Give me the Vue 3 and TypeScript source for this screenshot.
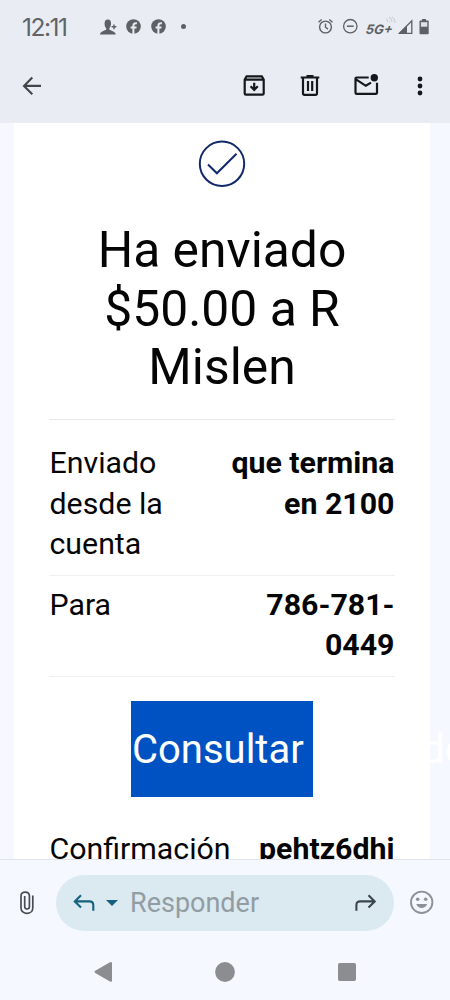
<script setup lang="ts">
interface Detail {
  label: string
  value: string
}

const headingLines: string[] = ['Ha enviado', '$50.00 a R', 'Mislen']
const details: Detail[] = [
  { label: 'Enviado desde la cuenta', value: 'que termina en 2100' },
  { label: 'Para', value: '786-781-0449' },
]
</script>

<template>
  <div class="screen">
    <header class="top">
      <div class="status">
        <span class="clock">12:11</span>
        <div class="notices">
          <svg width="16" height="16" viewBox="0 0 16 16" fill="#5d6064">
            <path d="M7.800.5C10.400.5 11.200 2.400 11 5.200C10.800 7.200 10 8.500 9.400 9.200V10.500C10.500 11.700 15.300 12.200 15.800 15.400H0C.4 12.200 5.200 11.700 6.200 10.500V9.200C5.400 8.500 4.700 7 4.600 5.200C4.400 2.300 5.400.5 7.800.5Z" />
            <path d="M13.300 5.400h1.400v1.700h1.700v1.400h-1.700v1.700h-1.400V8.500h-1.700V7.100h1.700Z" />
          </svg>
          <svg v-for="n in 2" :key="n" width="16" height="16" viewBox="0 0 16 16">
            <circle cx="7.500" cy="7.500" r="7.300" fill="#5d6064" />
            <path d="M7.400 15.300V7C7.400 4.700 8.600 3.900 10.900 4.200M4.600 8.500H10.500" fill="none" stroke="#e9edf3" stroke-width="2" />
          </svg>
          <i class="dot"></i>
        </div>
        <div class="system">
          <svg class="alarm" width="16" height="16" viewBox="0 0 16 16" fill="none" stroke="#5d6064" stroke-width="1.400">
            <circle cx="7.500" cy="8" r="5.900" />
            <path d="M7.500 4.500V8.200l2.500 1.900M.5 3.200 3.700.5M11.300.5 14.500 3.200" />
          </svg>
          <svg class="dnd" width="16" height="16" viewBox="0 0 16 16" fill="none" stroke="#5d6064" stroke-width="1.300">
            <circle cx="7.300" cy="7.200" r="6.700" />
            <path d="M3.900 7.200h6.800" stroke-width="1.500" />
          </svg>
          <span class="network"><span class="network-name">5G+</span>
            <svg class="waves" width="10" height="8" viewBox="0 0 10 8" fill="none" stroke="#cdd0d4" stroke-width="1.200">
              <path d="M.5 2.500 2 6M3 1c2 1 3 3 3 5M6 1c2 1 3 3 3 6M3 6h1" />
            </svg>
          </span>
          <svg class="signal" width="15" height="15" viewBox="0 0 15 15">
            <path d="M.5 13.300 12.800.8V13.300Z" fill="none" stroke="#5d6064" stroke-width="1.300" />
            <path d="M-.5 13.800 8 5.500V13.800Z" fill="#5d6064" />
          </svg>
          <svg class="battery" width="10" height="16" viewBox="0 0 10 16">
            <path d="M2 0h4v1.600h2q.7 0 .7.700v12q0 .9-.9.900H.4q-.9 0-.9-.9V2.300q0-.7.700-.7h1.800Z" fill="#5d6064" />
            <path d="M.9 3.200h6.400v4.500H.9Z" fill="#dfe3e8" />
          </svg>
        </div>
      </div>
      <nav class="toolbar">
        <svg class="back" width="20" height="20" viewBox="0 0 20 20" fill="none" stroke="#424649" stroke-width="2.100">
          <path d="M10.300 1.500 2 9.900 10.300 18.300M2 9.900H19" />
        </svg>
        <svg class="archive" width="22" height="22" viewBox="0 0 22 22" fill="none" stroke="#15181b" stroke-width="2.200">
          <path d="M1.700 4.500V18.400q0 1.300 1.300 1.300H19.400q1.300 0 1.300-1.300V4.500L18.800 1.300H3.600ZM1.700 4.700H20.700M11.200 7.800V14.500M7.600 11.300 11.200 14.900 14.800 11.300" />
        </svg>
        <svg class="trash" width="20" height="22" viewBox="0 0 20 22" fill="none" stroke="#15181b" stroke-width="2.200">
          <path d="M.7 2.500H19.300M6.500 1.200h7M3 2.500V18.300q0 1.500 1.500 1.500h11q1.500 0 1.500-1.500V2.500M8 6V16M12.200 6V16" />
        </svg>
        <svg class="mail" width="25" height="22" viewBox="0 0 25 22" fill="none" stroke="#15181b" stroke-width="2.200">
          <path d="M14.700 2.500H2.700q-1.200 0-1.200 1.200V17.700q0 1.200 1.200 1.200H21.800q1.200 0 1.200-1.200V7.800M2 4.300 11.800 10.800 17 7.600" />
          <circle cx="20.300" cy="2.700" r="3.700" fill="#15181b" stroke="none" />
        </svg>
        <svg class="more" width="6" height="20" viewBox="0 0 6 20" fill="#15181b">
          <circle cx="3" cy="3" r="2.400" />
          <circle cx="3" cy="10" r="2.400" />
          <circle cx="3" cy="17" r="2.400" />
        </svg>
      </nav>
    </header>

    <main class="viewport">
      <article class="card">
        <svg class="check" width="48" height="48" viewBox="0 0 48 48" fill="none" stroke="#12296a" stroke-width="2">
          <circle cx="24" cy="23.800" r="22.200" />
          <path d="M10 24.500 18.900 33.300 38.500 13.800" />
        </svg>
        <h1>
          <span v-for="line in headingLines" :key="line">{{ line }}</span>
        </h1>
        <dl>
          <div v-for="item in details" :key="item.label" class="row">
            <dt>{{ item.label }}</dt>
            <dd>{{ item.value }}</dd>
          </div>
        </dl>
        <a class="action">Consultar <span>el estado</span></a>
        <div class="row last">
          <span>Confirmación</span>
          <b>pehtz6dhi</b>
        </div>
      </article>
    </main>

    <footer class="bottom">
      <div class="reply-bar">
        <svg class="clip" width="16" height="24" viewBox="0 0 16 24" fill="none" stroke="#494d51" stroke-width="1.700">
          <path d="M13.800 4.500V16.700C13.800 24.300 2 24.300 2 16.700V5C2-.3 10.400-.3 10.400 5V15.500C10.400 18.800 5.700 18.800 5.700 15.500V5" />
        </svg>
        <div class="reply">
          <svg class="answer" width="22" height="18" viewBox="0 0 22 18" fill="none" stroke="#14627f" stroke-width="2.100">
            <path d="M8 1.200 1.800 7.400 8 13.600M2 7.400H16.500Q20.300 7.400 20.300 11.200V16.800" />
          </svg>
          <i class="caret"></i>
          <span class="placeholder">Responder</span>
          <svg class="forward" width="22" height="18" viewBox="0 0 22 18" fill="none" stroke="#3c454b" stroke-width="2.100">
            <path d="M13.500 1.200 19.700 7.400 13.500 13.600M19.500 7.400H5.200Q1.400 7.400 1.400 11.200V16.800" />
          </svg>
        </div>
        <svg class="smile" width="24" height="24" viewBox="0 0 24 24" fill="#8e9296">
          <circle cx="11.700" cy="11.300" r="10.700" fill="none" stroke="#8e9296" stroke-width="1.900" />
          <circle cx="7.700" cy="8.200" r="1.800" />
          <circle cx="15.700" cy="8.200" r="1.800" />
          <path d="M6.300 13H17.100C15.500 18.200 7.900 18.200 6.300 13Z" />
        </svg>
      </div>
      <nav class="keys">
        <svg width="18" height="22" viewBox="0 0 18 22" fill="#8c8d90">
          <path d="M1.200 9.700 16 1.200Q18 .2 18 2.300V19.600Q18 21.500 16 20.500L1.200 11.900Q-.4 10.800 1.200 9.700Z" />
        </svg>
        <svg width="20" height="20" viewBox="0 0 20 20" fill="#8c8d90">
          <circle cx="10" cy="10" r="9.900" />
        </svg>
        <svg width="18" height="18" viewBox="0 0 18 18" fill="#8c8d90">
          <rect width="18" height="18" rx="1.800" />
        </svg>
      </nav>
    </footer>
  </div>
</template>

<style>
body {
  margin: 0;
}
</style>

<style scoped>
.screen {
  width: 450px;
  height: 1000px;
  display: flex;
  flex-direction: column;
  overflow: hidden;
  background: #f5f9ff;
  font-family: Roboto, sans-serif;
  color: #050505;
}
svg {
  display: block;
  flex: none;
  overflow: visible;
}
.top {
  height: 123px;
  flex: none;
  background: #e9edf3;
}
.status {
  height: 54px;
  display: flex;
  align-items: center;
  padding: 0 20px 0 22px;
  box-sizing: border-box;
}
.clock {
  width: 78px;
  font: 400 24.5px/30px Inter, sans-serif;
  letter-spacing: -1.5px;
  color: #606367;
}
.notices {
  display: flex;
  align-items: center;
  gap: 9.5px;
}
.dot {
  width: 5px;
  height: 5px;
  margin: 0 0 1px 4px;
  border-radius: 50%;
  background: #5d6064;
}
.system {
  margin-left: auto;
  display: flex;
  align-items: center;
}
.dnd {
  margin-left: 9px;
}
.network {
  position: relative;
  width: 27px;
  margin: 3px 6px 0 7px;
  font: italic 700 13px/16px Inter, sans-serif;
  color: #5d6064;
}
.network-name {
  display: inline-block;
  transform: skewX(-8deg);
}
.waves {
  position: absolute;
  right: -3px;
  top: -5px;
}
.battery {
  margin-left: 6px;
}
.toolbar {
  height: 64px;
  display: flex;
  align-items: center;
  padding: 0 27.5px 0 22px;
}
.archive {
  margin-left: auto;
}
.trash {
  margin-left: 35px;
}
.mail {
  margin-left: 34px;
}
.more {
  margin-left: 37.5px;
}
.viewport {
  height: 736px;
  flex: none;
  overflow: hidden;
}
.card {
  width: 416px;
  height: 800px;
  margin-left: 14px;
  padding: 17px 35px 0;
  box-sizing: border-box;
  background: #fff;
}
.check {
  margin: 0 auto;
}
h1 {
  margin: 33px 0 22px;
  font-size: 49.8px;
  line-height: 58.5px;
  font-weight: 400;
  text-align: center;
}
h1 span {
  display: block;
}
dl {
  margin: 0;
  border-top: 1px solid #e6e7e9;
  padding-top: 14.5px;
}
.row {
  display: flex;
  justify-content: space-between;
  padding: 9px 0.5px 10px;
  font-size: 30.3px;
  line-height: 40.6px;
  border-bottom: 1px solid #f0f0f2;
}
dt {
  width: 130px;
}
dd {
  width: 180px;
  margin: 0;
  font-weight: 700;
  text-align: right;
}
.action {
  display: block;
  width: 181px;
  height: 96px;
  margin: 24px 0 0 82px;
  padding-left: 1px;
  font-size: 40px;
  line-height: 97px;
  white-space: nowrap;
  color: #fff;
  background: #0052c2;
}
.action span {
  word-spacing: -9px;
}
.row.last {
  margin-top: 23px;
  border: 0;
}
.bottom {
  height: 141px;
  flex: none;
  box-sizing: border-box;
  border-top: 1px solid #e0e4ea;
  background: #f5f9ff;
}
.reply-bar {
  height: 85px;
  display: flex;
  align-items: center;
  padding-left: 19px;
}
.reply {
  width: 338px;
  height: 56px;
  margin: 0 16px 0 21px;
  display: flex;
  align-items: center;
  box-sizing: border-box;
  padding: 0 17px;
  border-radius: 28px;
  background: #dbe9f1;
}
.caret {
  margin-left: 11px;
  border: 6px solid transparent;
  border-top-color: #14627f;
  border-bottom: 0;
}
.placeholder {
  margin-left: 12px;
  font-size: 27px;
  color: #929ca3;
}
.forward {
  margin-left: auto;
}
.keys {
  display: flex;
  align-items: center;
  justify-content: space-between;
  height: 54px;
  padding: 0 94px;
}
</style>
